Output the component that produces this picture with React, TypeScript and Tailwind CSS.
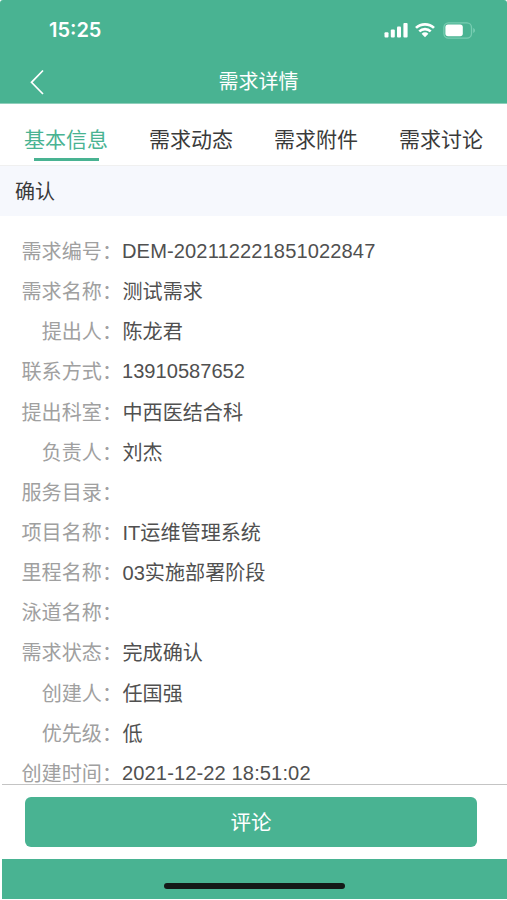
const TABS = ["基本信息", "需求动态", "需求附件", "需求讨论"];

const FIELDS: { label: string; value: string }[] = [
  { label: "需求编号", value: "DEM-202112221851022847" },
  { label: "需求名称", value: "测试需求" },
  { label: "提出人", value: "陈龙君" },
  { label: "联系方式", value: "13910587652" },
  { label: "提出科室", value: "中西医结合科" },
  { label: "负责人", value: "刘杰" },
  { label: "服务目录", value: "" },
  { label: "项目名称", value: "IT运维管理系统" },
  { label: "里程名称", value: "03实施部署阶段" },
  { label: "泳道名称", value: "" },
  { label: "需求状态", value: "完成确认" },
  { label: "创建人", value: "任国强" },
  { label: "优先级", value: "低" },
  { label: "创建时间", value: "2021-12-22 18:51:02" },
];

// Codes and dates sit a touch higher than Chinese text, and hyphenated ones
// are set slightly wider.
function valueClass(value: string) {
  if (value.includes("-")) return "pb-0.5 tracking-[0.11px] text-[#505050]";
  if (/^\d+$/.test(value)) return "pb-0.5 text-[#505050]";
  return "pl-[0.5px] text-[#505050]";
}

function SignalIcon() {
  return (
    <svg width="25" height="16" viewBox="0 0 25 16" fill="white">
      <rect x="0.5" y="10.2" width="4" height="5.3" rx="1" />
      <rect x="6.8" y="7.6" width="4" height="7.9" rx="1" />
      <rect x="13" y="4.4" width="4" height="11.1" rx="1" />
      <rect x="19.4" y="0.9" width="4.2" height="14.6" rx="1" />
    </svg>
  );
}

function WifiIcon() {
  return (
    <svg width="20" height="16" viewBox="0 0 20 16" fill="none">
      <g stroke="white" strokeWidth="2.7">
        <path d="M1 5.9a13 13 0 0 1 18 0" />
        <path d="M4.3 9.4a8.2 8.2 0 0 1 11.4 0" />
      </g>
      <path d="M6.6 11.7a4.9 4.9 0 0 1 6.8 0L10 15.2z" fill="white" />
    </svg>
  );
}

function BatteryIcon() {
  return (
    <svg width="33" height="17" viewBox="0 0 33 17" fill="none">
      <rect x="0.9" y="0.9" width="27.6" height="15.2" rx="4.6" stroke="#78cdb2" strokeWidth="1.3" />
      <path d="M30.2 6v5c1.1-.4 1.8-1.4 1.8-2.5S31.3 6.4 30.2 6z" fill="#78cdb2" />
      <rect x="2.4" y="2.6" width="17.4" height="11.6" rx="2.6" fill="white" />
    </svg>
  );
}

function Header() {
  return (
    <header className="h-[104px] shrink-0 rounded-t-[3px] border-b border-[#8fcfbb] bg-[#49b392] text-white">
      <div className="flex h-[60px] items-center pl-[49px] pr-[31px]">
        <span className="font-['Inter','Liberation_Sans',sans-serif] text-[20px] font-semibold leading-none">
          15:25
        </span>
        <div className="ml-auto flex items-center">
          <SignalIcon />
          <span className="ml-[6px] flex">
            <WifiIcon />
          </span>
          <span className="ml-[8px] flex">
            <BatteryIcon />
          </span>
        </div>
      </div>
      <div className="grid h-[43px] grid-cols-[60px_1fr_50px] items-center">
        <svg className="ml-[29px]" width="16" height="26" viewBox="0 0 16 26" fill="none">
          <path d="M14 1.5L2.5 13.3L14 25" stroke="white" strokeWidth="1.7" />
        </svg>
        <h1 className="text-center text-[20px] font-normal leading-none">需求详情</h1>
      </div>
    </header>
  );
}

export default function App() {
  return (
    <div className="flex h-[900px] w-[507px] flex-col overflow-hidden bg-white font-['Liberation_Sans','Noto_Sans_CJK_SC',sans-serif]">
      <Header />

      <nav className="grid h-[62px] shrink-0 grid-cols-4 border-b border-[#f0f0f0] px-[3.5px] text-[21px] text-[#3a3a3a]">
        {TABS.map((tab, i) => (
          <div key={tab} className="flex flex-col items-center pt-[19px]">
            <span className={i === 0 ? "leading-[34px] text-[#49b392]" : "leading-[34px]"}>
              {tab}
            </span>
            {i === 0 && <span className="ml-px mt-px h-[2.5px] w-[65px] bg-[#49b392]" />}
          </div>
        ))}
      </nav>

      <div className="flex h-[50px] shrink-0 items-center bg-[#f6f8fd] pl-[15px] pt-0.5 text-[20px] text-[#3a3a3a]">
        确认
      </div>

      <main className="min-h-0 flex-1 overflow-hidden pt-4 text-[20.1px]">
        {FIELDS.map((f) => (
          <div key={f.label} className="flex h-[40.15px] items-center whitespace-nowrap">
            <span className="w-[122px] shrink-0 text-right text-[#a0a0a0]">{f.label}：</span>
            <span className={valueClass(f.value)}>{f.value}</span>
          </div>
        ))}
      </main>

      <footer className="shrink-0">
        <div className="ml-0.5 h-[75px] border-t border-[#c4c4c4] pl-[23px] pr-[30px] pt-3">
          <button className="flex h-[50px] w-full items-center justify-center rounded-md bg-[#49b392] pt-0.5 text-[20.5px] text-white">
            评论
          </button>
        </div>
        <div className="mb-px ml-0.5 flex h-10 items-start justify-center bg-[#49b392] pt-6">
          <div className="h-1.5 w-[181px] rounded-full bg-[#141a18]" />
        </div>
      </footer>
    </div>
  );
}
